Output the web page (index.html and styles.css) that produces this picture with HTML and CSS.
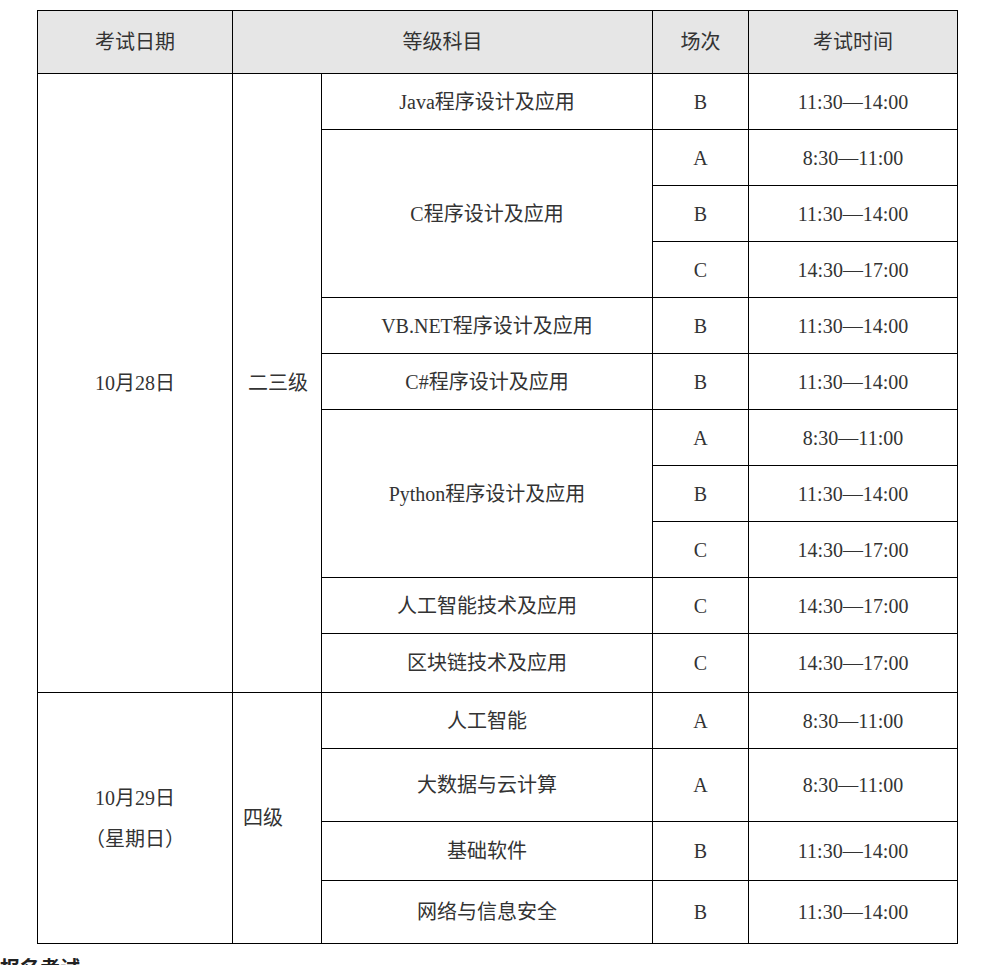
FILE: index.html
```html
<!DOCTYPE html>
<html lang="zh-CN">
<head>
<meta charset="utf-8">
<title>考试安排</title>
<link rel="stylesheet" href="styles.css">
</head>
<body>
<div class="schedule">
  <div class="cell head">考试日期</div>
  <div class="cell head">等级科目</div>
  <div class="cell head">场次</div>
  <div class="cell head">考试时间</div>

  <div class="cell span11">10月28日</div>
  <div class="cell span11 level lv23">二三级</div>
  <div class="cell">Java程序设计及应用</div>
  <div class="cell">B</div>
  <div class="cell">11:30—14:00</div>

  <div class="cell span3">C程序设计及应用</div>
  <div class="cell">A</div>
  <div class="cell">8:30—11:00</div>
  <div class="cell">B</div>
  <div class="cell">11:30—14:00</div>
  <div class="cell">C</div>
  <div class="cell">14:30—17:00</div>

  <div class="cell">VB.NET程序设计及应用</div>
  <div class="cell">B</div>
  <div class="cell">11:30—14:00</div>

  <div class="cell">C#程序设计及应用</div>
  <div class="cell">B</div>
  <div class="cell">11:30—14:00</div>

  <div class="cell span3">Python程序设计及应用</div>
  <div class="cell">A</div>
  <div class="cell">8:30—11:00</div>
  <div class="cell">B</div>
  <div class="cell">11:30—14:00</div>
  <div class="cell">C</div>
  <div class="cell">14:30—17:00</div>

  <div class="cell">人工智能技术及应用</div>
  <div class="cell">C</div>
  <div class="cell">14:30—17:00</div>

  <div class="cell">区块链技术及应用</div>
  <div class="cell">C</div>
  <div class="cell">14:30—17:00</div>

  <div class="cell span4 stack"><p>10月29日</p><p>（星期日）</p></div>
  <div class="cell span4 level lv4">四级</div>
  <div class="cell">人工智能</div>
  <div class="cell">A</div>
  <div class="cell">8:30—11:00</div>

  <div class="cell">大数据与云计算</div>
  <div class="cell">A</div>
  <div class="cell">8:30—11:00</div>

  <div class="cell">基础软件</div>
  <div class="cell">B</div>
  <div class="cell">11:30—14:00</div>

  <div class="cell">网络与信息安全</div>
  <div class="cell">B</div>
  <div class="cell">11:30—14:00</div>
</div>
<p class="next">报名考试</p>
</body>
</html>
```

FILE: styles.css
```css
html, body {
  margin: 0;
  padding: 0;
  background: #fff;
}

body {
  padding: 10px 0 0 37px;
  font-family: "Liberation Serif", "Noto Sans CJK SC", serif;
  font-size: 20px;
  color: #333;
  overflow: hidden;
}

.schedule {
  display: inline-grid;
  grid-template-columns: 194px 88px 330px 95px 208px;
  grid-template-rows: 62px repeat(10, 55px) 58px 55px 72px 58px 62px;
  gap: 1px;
  padding: 1px;
  background: #000;
}

.cell {
  background: #fff;
  display: flex;
  align-items: center;
  justify-content: center;
  text-align: center;
  white-space: nowrap;
  line-height: 1;
}

.head {
  background: #e6e6e6;
}

.head:nth-child(2) {
  grid-column: span 2;
}

.span11 { grid-row: span 11; }
.span4  { grid-row: span 4; }
.span3  { grid-row: span 3; }

.level {
  justify-content: flex-start;
}
.lv23 { padding-left: 15px; }
.lv4  { padding-left: 10px; }

.stack {
  flex-direction: column;
  gap: 21px;
}
.stack p {
  margin: 0;
}

.next {
  margin: 12px 0 0 -37px;
  font-family: "Noto Sans CJK SC", sans-serif;
  font-weight: bold;
  font-size: 20px;
  color: #222;
  line-height: 1.2;
}
```
